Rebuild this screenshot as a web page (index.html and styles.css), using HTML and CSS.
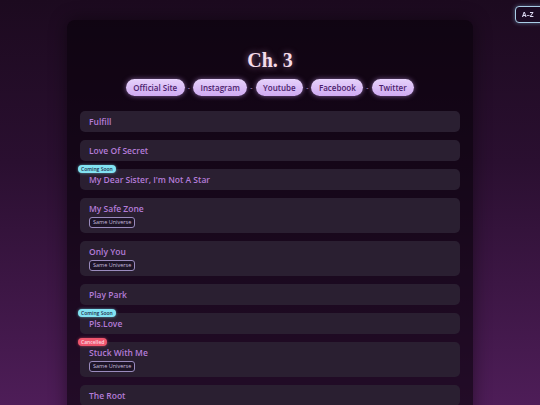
FILE: index.html
```html
<!DOCTYPE html>
<html>
<head>
<meta charset="utf-8">
<link rel="stylesheet" href="styles.css">
</head>
<body>
<button class="sort-btn">A–Z</button>
<main class="panel">
  <h1 class="title">Ch. 3</h1>
  <nav class="links">
    <a class="pill">Official Site</a><span class="sep">-</span>
    <a class="pill">Instagram</a><span class="sep">-</span>
    <a class="pill">Youtube</a><span class="sep">-</span>
    <a class="pill">Facebook</a><span class="sep">-</span>
    <a class="pill">Twitter</a>
  </nav>
  <ul class="list">
    <li class="item"><span class="name">Fulfill</span></li>
    <li class="item"><span class="name">Love Of Secret</span></li>
    <li class="item"><span class="status soon">Coming Soon</span><span class="name">My Dear Sister, I'm Not A Star</span></li>
    <li class="item"><span class="name">My Safe Zone</span><span class="tag">Same Universe</span></li>
    <li class="item"><span class="name">Only You</span><span class="tag">Same Universe</span></li>
    <li class="item"><span class="name">Play Park</span></li>
    <li class="item"><span class="status soon">Coming Soon</span><span class="name">Pls.Love</span></li>
    <li class="item"><span class="status cancelled">Cancelled</span><span class="name">Stuck With Me</span><span class="tag">Same Universe</span></li>
    <li class="item"><span class="name">The Root</span></li>
  </ul>
</main>
</body>
</html>
```
FILE: styles.css
```css
* { box-sizing: border-box; }
html, body { margin: 0; height: 405px; overflow: hidden; }
body {
  background: linear-gradient(180deg, #1c0a1f 0%, #2a0f30 40%, #4e1d58 100%);
  font-family: "Open Sans", "DejaVu Sans", sans-serif;
}
.sort-btn {
  position: fixed;
  top: 6px;
  left: 515px;
  width: 30px;
  height: 17px;
  border: 1.5px solid #a9cde6;
  border-radius: 4px;
  background: #1c0b24;
  color: #dcdaf2;
  font-family: "Open Sans", sans-serif;
  font-weight: 700;
  font-size: 6.5px;
  text-align: left;
  padding: 0 0 0 6px;
  box-shadow: 0 0 4px rgba(140, 190, 230, 0.5);
}
.panel {
  width: 406px;
  margin: 20px auto 0;
  padding: 26px 13px 20px;
  background: rgba(8, 2, 10, 0.62);
  border-radius: 8px;
  box-shadow: 0 0 18px rgba(0, 0, 0, 0.45);
  min-height: 420px;
}
.title {
  margin: 0;
  text-align: center;
  font-family: "Liberation Serif", "DejaVu Serif", serif;
  font-weight: 700;
  font-size: 20px;
  line-height: 28px;
  color: #f6dcea;
  text-shadow: 0 0 6px rgba(240, 180, 220, 0.55);
}
.links {
  margin-top: 5px;
  display: flex;
  justify-content: center;
  align-items: center;
  gap: 2px;
}
.pill {
  display: inline-flex;
  align-items: center;
  height: 17px;
  padding: 0 7.5px;
  border-radius: 9px;
  background: linear-gradient(180deg, #e6d2fa 0%, #cfaaf2 100%);
  color: #4b1d6c;
  font-size: 8px;
  font-weight: 600;
  box-shadow: 0 0 5px rgba(210, 160, 250, 0.55);
}
.sep {
  color: #c8a8e6;
  font-size: 7px;
  padding: 0 1px;
}
.list {
  list-style: none;
  margin: 15px 0 0;
  padding: 0;
  display: flex;
  flex-direction: column;
  gap: 8px;
}
.item {
  position: relative;
  display: flex;
  flex-direction: column;
  align-items: flex-start;
  gap: 3px;
  padding: 5px 9px;
  min-height: 21px;
  background: #2a1f31;
  border-radius: 5px;
}
.name {
  font-size: 8.5px;
  line-height: 11px;
  font-weight: 600;
  color: #b47cd8;
}
.tag {
  display: inline-block;
  height: 11px;
  line-height: 9px;
  padding: 0 3px;
  border: 1px solid #9a8bbd;
  border-radius: 3px;
  background: #1d1427;
  color: #c7bddf;
  font-size: 5.5px;
}
.status {
  position: absolute;
  top: -4px;
  left: -2px;
  height: 8px;
  line-height: 8px;
  padding: 0 3px;
  border-radius: 4px;
  font-size: 5px;
  font-weight: 600;
}
.soon {
  background: #82e3f2;
  color: #1d2c4a;
  box-shadow: 0 0 3px rgba(130, 227, 242, 0.6);
}
.cancelled {
  background: #f0566e;
  color: #ffd8e0;
  box-shadow: 0 0 3px rgba(240, 86, 110, 0.6);
}
```
